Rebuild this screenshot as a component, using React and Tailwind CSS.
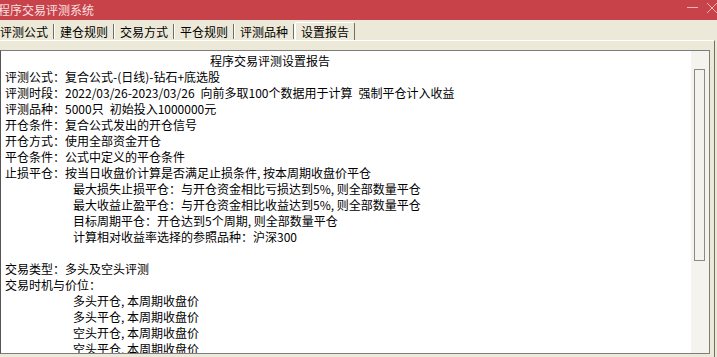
const tabs = ["评测公式", "建仓规则", "交易方式", "平仓规则", "评测品种"];

const lines = [
  { text: "评测公式：复合公式-(日线)-钻石+底选股" },
  { text: "评测时段：2022/03/26-2023/03/26\u2002向前多取100个数据用于计算\u2002强制平仓计入收益" },
  { text: "评测品种：5000只\u2002初始投入1000000元" },
  { text: "开仓条件：复合公式发出的开仓信号" },
  { text: "开仓方式：使用全部资金开仓" },
  { text: "平仓条件：公式中定义的平仓条件" },
  { text: "止损平仓：按当日收盘价计算是否满足止损条件, 按本周期收盘价平仓" },
  { text: "最大损失止损平仓：与开仓资金相比亏损达到5%, 则全部数量平仓", indent: true },
  { text: "最大收益止盈平仓：与开仓资金相比收益达到5%, 则全部数量平仓", indent: true },
  { text: "目标周期平仓：开仓达到5个周期, 则全部数量平仓", indent: true },
  { text: "计算相对收益率选择的参照品种：沪深300", indent: true },
  { text: "" },
  { text: "交易类型：多头及空头评测" },
  { text: "交易时机与价位：" },
  { text: "多头开仓, 本周期收盘价", indent: true },
  { text: "多头平仓, 本周期收盘价", indent: true },
  { text: "空头开仓, 本周期收盘价", indent: true },
  { text: "空头平仓, 本周期收盘价", indent: true },
];

const App = () => {
  return (
    <div className="w-[717px] h-[357px] overflow-hidden bg-[#ece9d8] font-['Noto_Sans_CJK_SC',sans-serif] text-[12px] text-black">
      {/* Title bar */}
      <div className="h-[20px] bg-[#c8424a] flex items-center">
        <span className="-ml-[2px] text-[#f8e0e1] leading-[20px]">程序交易评测系统</span>
        <div className="ml-auto flex items-center gap-[9px] h-[20px]">
          <svg width="11" height="20" viewBox="0 0 11 20">
            <line x1="0" y1="7.5" x2="11" y2="7.5" stroke="#f2b3b6" strokeWidth="1" />
          </svg>
          <svg width="10" height="20" viewBox="0 0 10 20">
            <line x1="0" y1="3" x2="10" y2="13" stroke="#f2b3b6" strokeWidth="1" />
            <line x1="10" y1="3" x2="0" y2="13" stroke="#f2b3b6" strokeWidth="1" />
          </svg>
        </div>
      </div>

      {/* Tabs */}
      <div className="h-[20px] flex -ml-[5px]">
        {tabs.map((t) => (
          <div key={t} className="w-[60px] flex items-end">
            <span className="flex-1 text-center leading-[16px]">{t}</span>
            <div className="h-[15px] w-[1px] bg-[#716f64] mb-[1px]" />
            <div className="h-[15px] w-[1px] bg-white mb-[1px]" />
          </div>
        ))}
        <div className="w-[60px] h-[18px] self-end border-l border-t border-r border-l-white border-t-white border-r-[#716f64] rounded-t-[2px] flex items-center justify-center leading-[16px]">
          设置报告
        </div>
      </div>

      {/* Panel */}
      <div className="border-t border-white border-r border-r-[#716f64] w-[715px] h-[317px] pt-[9px]">
        <div className="w-[710px] h-[304px] border border-[#7d7d7d] border-l-[#555] flex">
          <div className="flex-1 bg-white pl-[4px] pt-[2px] overflow-hidden">
            <div className="leading-[16px] h-[16px] pl-[205px] whitespace-pre">程序交易评测设置报告</div>
            {lines.map((l, i) => (
              <div
                key={i}
                className={
                  "leading-[16px] h-[16px] whitespace-pre " + (l.indent ? "pl-[68px]" : "")
                }
              >
                {l.text}
              </div>
            ))}
          </div>
          <div className="w-[18px] bg-[#f4f3ee] pt-[18px] pl-[3px]">
            <div className="w-[11px] h-[192px] border border-[#8a8a86] bg-[#f4f3ee]" />
          </div>
        </div>
      </div>
    </div>
  );
};

export default App;
